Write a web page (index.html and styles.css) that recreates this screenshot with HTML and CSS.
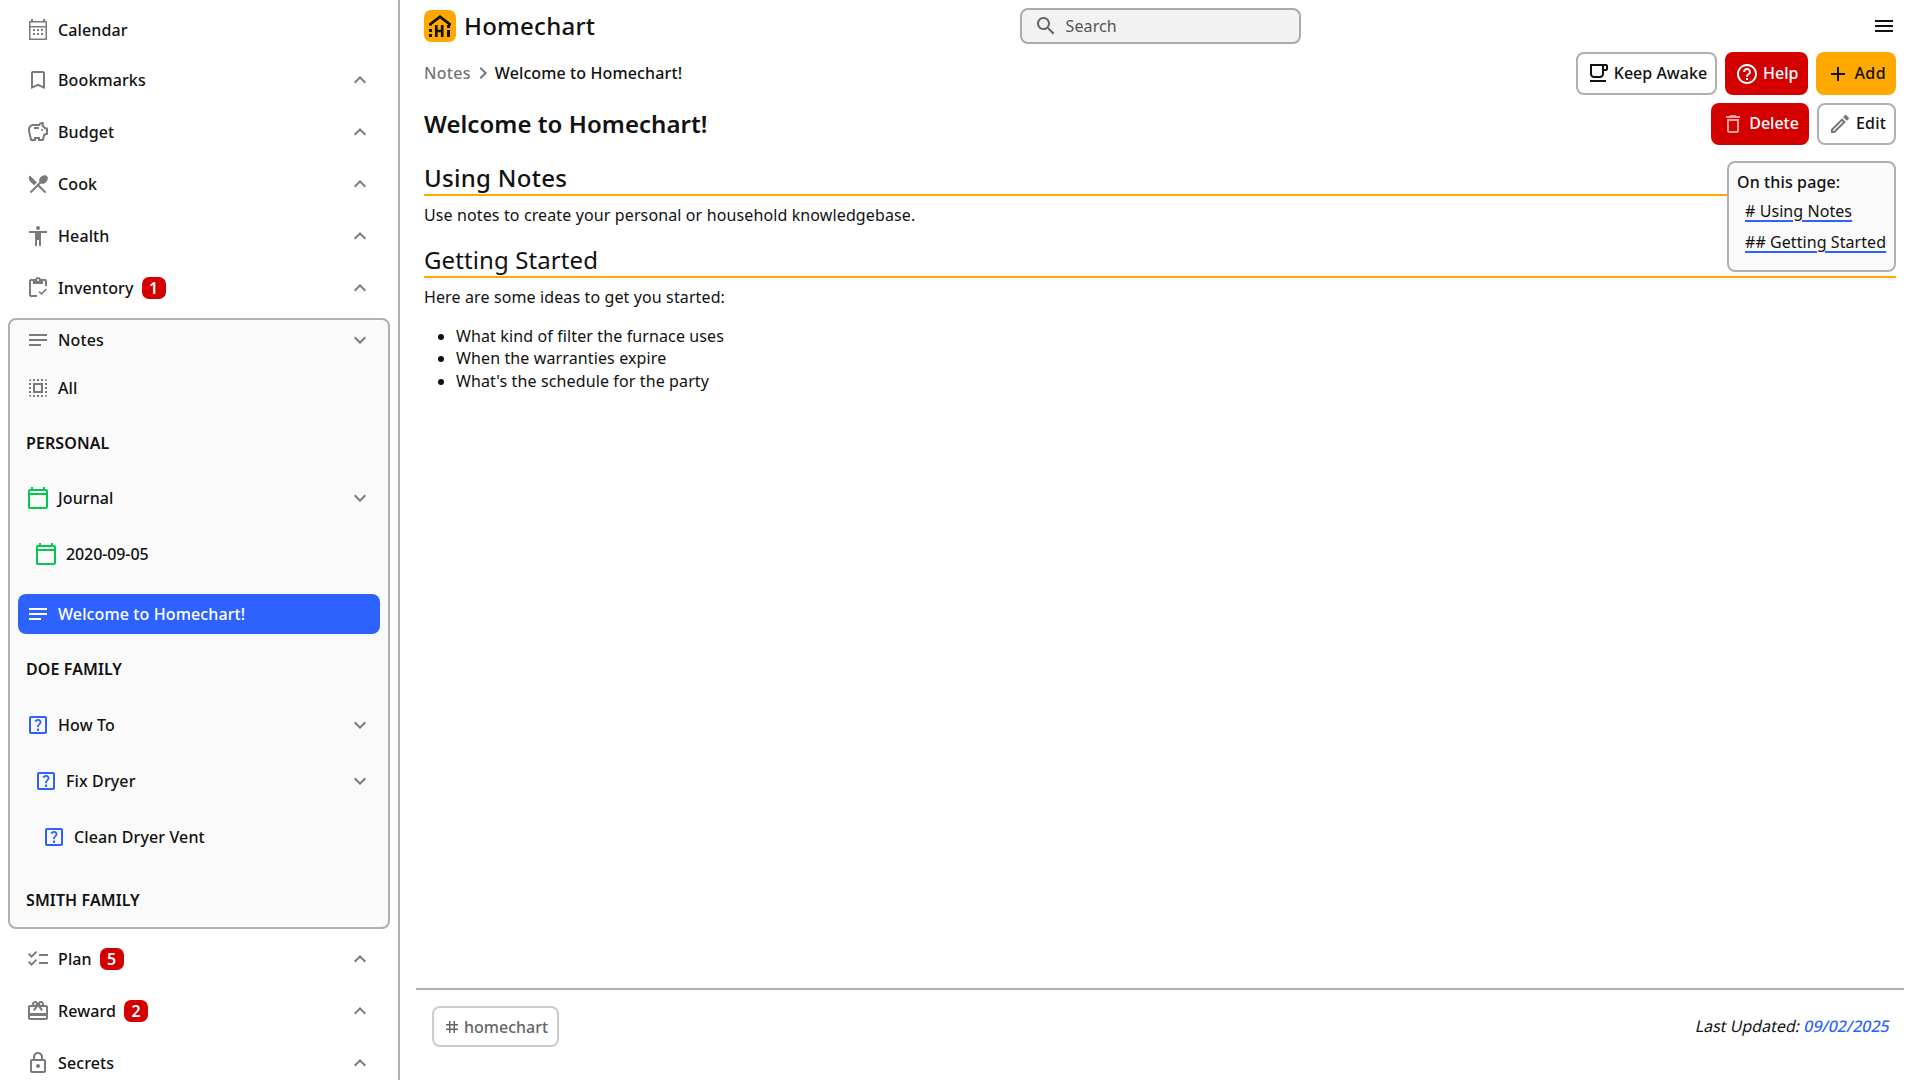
FILE: index.html
```html
<!DOCTYPE html>
<html lang="en">
  <head>
    <meta charset="UTF-8" />
    <meta name="viewport" content="width=device-width, initial-scale=1.0" />
    <title>Homechart</title>
    <link rel="stylesheet" href="styles.css">
  </head>
  <body>
    <svg class="defs" width="0" height="0">
      <symbol id="i-calendar" viewBox="0 0 24 24"><path d="M5 3V1h2v2h10V1h2v2h1c.6 0 1 .4 1 1v17c0 .6-.4 1-1 1H4c-.6 0-1-.4-1-1V4c0-.6.4-1 1-1zM4.500 4.500V8h15V4.500zm0 5v11h15v-11z"/><path d="M7 11h2v2H7zM11 11h2v2h-2zM15 11h2v2h-2zM7 15h2v2H7zM11 15h2v2h-2zM15 15h2v2h-2z"/></symbol>
      <symbol id="i-bookmark" viewBox="0 0 24 24"><path d="M17 3H7c-1.100 0-2 .9-2 2v16l7-3 7 3V5c0-1.100-.9-2-2-2zm0 15l-5-2.180L7 18V5h10v13z"/></symbol>
      <symbol id="i-budget" viewBox="0 0 24 24"><path d="M15 10c0-.55.45-1 1-1s1 .45 1 1-.45 1-1 1-1-.45-1-1zM8 9h5V7H8v2zm14-1.500v6.970l-2.820.94L17.500 21H12v-2h-2v2H4.500S2 12.540 2 9.500 4.460 4 7.500 4h5c.91-1.210 2.360-2 4-2 .83 0 1.500.67 1.500 1.500 0 .21-.04.4-.12.58-.14.32-.26.69-.32 1.090l2.270 2.330H22zm-2 2h-1l-3.500-3.500c0-.65.09-1.290.26-1.910-.97.25-1.760.97-2.090 1.910H7.500C5.570 6 4 7.570 4 9.500c0 1.880 1.220 6.650 2.010 9.500H8v-2h6v2h2l1.550-5.150 2.450-.82V9.500z"/></symbol>
      <symbol id="i-cook" viewBox="0 0 24 24"><path d="M8.100 13.340l2.830-2.830L3.910 3.500c-1.560 1.560-1.560 4.090 0 5.660l4.190 4.180zm6.780-1.810c1.530.71 3.680.21 5.270-1.380 1.910-1.910 2.280-4.650.81-6.120-1.460-1.460-4.200-1.100-6.120.81-1.590 1.590-2.090 3.740-1.380 5.270L3.700 19.870l1.410 1.410L12 14.410l6.880 6.880 1.410-1.410L13.410 13l1.470-1.470z"/></symbol>
      <symbol id="i-health" viewBox="0 0 24 24"><path d="M12 2c1.100 0 2 .9 2 2s-.9 2-2 2-2-.9-2-2 .9-2 2-2zm9 7h-6v13h-2v-6h-2v6H9V9H3V7h18v2z"/></symbol>
      <symbol id="i-inventory" viewBox="0 0 24 24"><path d="M5 5h2v3h10V5h2v5h2V5c0-1.100-.9-2-2-2h-4.180C14.400 1.840 13.300 1 12 1s-2.400.84-2.820 2H5c-1.100 0-2 .9-2 2v14c0 1.100.9 2 2 2h6v-2H5V5zm7-2c.55 0 1 .45 1 1s-.45 1-1 1-1-.45-1-1 .45-1 1-1z"/><path d="M21 13.500 15.500 19l-3-3 1.100-1.100 1.900 1.900 4.400-4.400z"/></symbol>
      <symbol id="i-notes" viewBox="0 0 24 24"><path d="M3 18h12v-2H3v2zM3 6v2h18V6H3zm0 7h18v-2H3v2z"/></symbol>
      <symbol id="i-all" viewBox="0 0 24 24"><path d="M3 5h2V3c-1.100 0-2 .9-2 2zm0 8h2v-2H3v2zm4 8h2v-2H7v2zM3 9h2V7H3v2zm10-6h-2v2h2V3zm6 0v2h2c0-1.100-.9-2-2-2zM5 21v-2H3c0 1.100.9 2 2 2zm-2-4h2v-2H3v2zM9 3H7v2h2V3zm2 18h2v-2h-2v2zm8-8h2v-2h-2v2zm0 8c1.100 0 2-.9 2-2h-2v2zm0-12h2V7h-2v2zm0 8h2v-2h-2v2zm-4 4h2v-2h-2v2zm0-16h2V3h-2v2zM7 17h10V7H7v10zm2-8h6v6H9V9z"/></symbol>
      <symbol id="i-journal" viewBox="0 0 24 24"><path d="M20 3h-1V1h-2v2H7V1H5v2H4c-1.100 0-2 .9-2 2v16c0 1.100.9 2 2 2h16c1.100 0 2-.9 2-2V5c0-1.100-.9-2-2-2zm0 18H4V9h16v12zm0-14H4V5h16v2z"/></symbol>
      <symbol id="i-howto" viewBox="0 0 24 24"><path d="M13.250 16.740c0 .69-.53 1.260-1.250 1.260-.7 0-1.260-.56-1.260-1.260 0-.71.56-1.250 1.260-1.250.71 0 1.250.55 1.250 1.250zM11.990 6c-1.770 0-2.980 1.150-3.430 2.490l1.640.69c.22-.67.74-1.480 1.800-1.480 1.620 0 1.940 1.520 1.370 2.330-.54.77-1.470 1.290-1.960 2.160-.39.69-.31 1.490-.31 1.980h1.820c0-.93.07-1.120.22-1.410.39-.72 1.110-1.060 1.870-2.170.68-1 .42-2.360-.02-3.080-.51-.84-1.530-1.510-3-1.510zM19 5H5v14h14V5m0-2c1.100 0 2 .9 2 2v14c0 1.100-.9 2-2 2H5c-1.100 0-2-.9-2-2V5c0-1.100.9-2 2-2h14z"/></symbol>
      <symbol id="i-plan" viewBox="0 0 24 24"><path d="M22 7h-9v2h9V7zm0 8h-9v2h9v-2zM5.540 11 2 7.460l1.410-1.410 2.120 2.120 4.240-4.240 1.410 1.410L5.540 11zm0 8L2 15.460l1.410-1.410 2.120 2.120 4.240-4.240 1.410 1.410L5.540 19z"/></symbol>
      <symbol id="i-reward" viewBox="0 0 24 24"><path d="M20 6h-2.180c.11-.31.18-.65.18-1 0-1.660-1.340-3-3-3-1.050 0-1.960.54-2.500 1.350l-.5.67-.5-.68C10.960 2.540 10.050 2 9 2 7.340 2 6 3.340 6 5c0 .35.07.69.18 1H4c-1.110 0-1.990.89-1.990 2L2 19c0 1.110.89 2 2 2h16c1.110 0 2-.89 2-2V8c0-1.110-.89-2-2-2zm-5-2c.55 0 1 .45 1 1s-.45 1-1 1-1-.45-1-1 .45-1 1-1zM9 4c.55 0 1 .45 1 1s-.45 1-1 1-1-.45-1-1 .45-1 1-1zm11 15H4v-2h16v2zm0-5H4V8h5.080L7 10.830 8.620 12 12 7.400l3.380 4.600L17 10.830 14.920 8H20v6z"/></symbol>
      <symbol id="i-lock" viewBox="0 0 24 24"><path d="M18 8h-1V6c0-2.760-2.240-5-5-5S7 3.240 7 6v2H6c-1.100 0-2 .9-2 2v10c0 1.100.9 2 2 2h12c1.100 0 2-.9 2-2V10c0-1.100-.9-2-2-2zM9 6c0-1.660 1.340-3 3-3s3 1.340 3 3v2H9V6zm9 14H6V10h12v10zm-6-3c1.100 0 2-.9 2-2s-.9-2-2-2-2 .9-2 2 .9 2 2 2z"/></symbol>
      <symbol id="i-up" viewBox="0 0 24 24"><path d="M12 8l-6 6 1.410 1.410L12 10.830l4.590 4.580L18 14z"/></symbol>
      <symbol id="i-down" viewBox="0 0 24 24"><path d="M16.590 8.590L12 13.170 7.410 8.590 6 10l6 6 6-6z"/></symbol>
      <symbol id="i-right" viewBox="0 0 24 24"><path d="M10 6 8.590 7.410 13.170 12l-4.580 4.590L10 18l6-6z"/></symbol>
      <symbol id="i-search" viewBox="0 0 24 24"><path d="M15.500 14h-.79l-.28-.27C15.410 12.590 16 11.110 16 9.500 16 5.910 13.090 3 9.500 3S3 5.910 3 9.500 5.910 16 9.500 16c1.610 0 3.090-.59 4.230-1.570l.27.28v.79l5 4.990L20.490 19l-4.990-5zm-6 0C7.010 14 5 11.990 5 9.500S7.010 5 9.500 5 14 7.010 14 9.500 11.990 14 9.500 14z"/></symbol>
      <symbol id="i-menu" viewBox="0 0 24 24"><path d="M3 18h18v-2H3v2zm0-5h18v-2H3v2zm0-7v2h18V6H3z"/></symbol>
      <symbol id="i-coffee" viewBox="0 0 24 24"><path d="M4 19h16v2H4zM20 3H4v10c0 2.210 1.790 4 4 4h6c2.210 0 4-1.790 4-4v-3h2c1.110 0 2-.89 2-2V5c0-1.110-.89-2-2-2zm-4 10c0 1.100-.9 2-2 2H8c-1.100 0-2-.9-2-2V5h10v8zm4-5h-2V5h2v3z"/></symbol>
      <symbol id="i-help" viewBox="0 0 24 24"><path d="M11 18h2v-2h-2v2zm1-16C6.480 2 2 6.480 2 12s4.480 10 10 10 10-4.480 10-10S17.520 2 12 2zm0 18c-4.410 0-8-3.590-8-8s3.590-8 8-8 8 3.590 8 8-3.590 8-8 8zm0-14c-2.210 0-4 1.790-4 4h2c0-1.100.9-2 2-2s2 .9 2 2c0 2-3 1.750-3 5h2c0-2.250 3-2.500 3-5 0-2.210-1.790-4-4-4z"/></symbol>
      <symbol id="i-add" viewBox="0 0 24 24"><path d="M19 13h-6v6h-2v-6H5v-2h6V5h2v6h6v2z"/></symbol>
      <symbol id="i-delete" viewBox="0 0 24 24"><path d="M6 19c0 1.100.9 2 2 2h8c1.100 0 2-.9 2-2V7H6v12zM8 9h8v10H8V9zm7.500-5l-1-1h-5l-1 1H5v2h14V4z"/></symbol>
      <symbol id="i-edit" viewBox="0 0 24 24"><path d="M3 17.250V21h3.750L17.810 9.940l-3.750-3.750L3 17.250zM5.920 19H5v-.92l9.060-9.060.92.92L5.920 19zM20.710 7.040c.39-.39.39-1.020 0-1.410l-2.340-2.340c-.2-.2-.45-.29-.71-.29s-.51.1-.7.29l-1.830 1.830 3.750 3.750 1.830-1.830z"/></symbol>
      <symbol id="i-tag" viewBox="0 0 24 24"><path d="M20 10V8h-4V4h-2v4h-4V4H8v4H4v2h4v4H4v2h4v4h2v-4h4v4h2v-4h4v-2h-4v-4h4zm-6 4h-4v-4h4v4z"/></symbol>
    </svg>

    <div class="app">
      <nav class="sidebar">
        <a class="nav-row nav-first"><svg class="icon"><use href="#i-calendar"/></svg><span>Calendar</span></a>
        <a class="nav-row"><svg class="icon"><use href="#i-bookmark"/></svg><span>Bookmarks</span><svg class="chevron"><use href="#i-up"/></svg></a>
        <a class="nav-row"><svg class="icon"><use href="#i-budget"/></svg><span>Budget</span><svg class="chevron"><use href="#i-up"/></svg></a>
        <a class="nav-row"><svg class="icon"><use href="#i-cook"/></svg><span>Cook</span><svg class="chevron"><use href="#i-up"/></svg></a>
        <a class="nav-row"><svg class="icon"><use href="#i-health"/></svg><span>Health</span><svg class="chevron"><use href="#i-up"/></svg></a>
        <a class="nav-row"><svg class="icon"><use href="#i-inventory"/></svg><span>Inventory</span><b class="badge">1</b><svg class="chevron"><use href="#i-up"/></svg></a>

        <div class="nav-open">
          <a class="tree-row tree-head"><svg class="icon"><use href="#i-notes"/></svg><span>Notes</span><svg class="chevron"><use href="#i-down"/></svg></a>
          <a class="tree-row tree-all"><svg class="icon"><use href="#i-all"/></svg><span>All</span></a>
          <div class="tree-row tree-label">PERSONAL</div>
          <a class="tree-row tree-journal"><svg class="icon icon-green"><use href="#i-journal"/></svg><span>Journal</span><svg class="chevron"><use href="#i-down"/></svg></a>
          <a class="tree-row level-1 tree-date"><svg class="icon icon-green"><use href="#i-journal"/></svg><span>2020-09-05</span></a>
          <a class="tree-row tree-selected"><svg class="icon"><use href="#i-notes"/></svg><span>Welcome to Homechart!</span></a>
          <div class="tree-row tree-label">DOE FAMILY</div>
          <a class="tree-row"><svg class="icon icon-blue"><use href="#i-howto"/></svg><span>How To</span><svg class="chevron"><use href="#i-down"/></svg></a>
          <a class="tree-row level-1"><svg class="icon icon-blue"><use href="#i-howto"/></svg><span>Fix Dryer</span><svg class="chevron"><use href="#i-down"/></svg></a>
          <a class="tree-row level-2"><svg class="icon icon-blue"><use href="#i-howto"/></svg><span>Clean Dryer Vent</span></a>
          <div class="tree-row tree-label tree-last">SMITH FAMILY</div>
        </div>

        <a class="nav-row nav-after"><svg class="icon"><use href="#i-plan"/></svg><span>Plan</span><b class="badge">5</b><svg class="chevron"><use href="#i-up"/></svg></a>
        <a class="nav-row"><svg class="icon"><use href="#i-reward"/></svg><span>Reward</span><b class="badge">2</b><svg class="chevron"><use href="#i-up"/></svg></a>
        <a class="nav-row"><svg class="icon"><use href="#i-lock"/></svg><span>Secrets</span><svg class="chevron"><use href="#i-up"/></svg></a>
      </nav>

      <main class="main">
        <header class="topbar">
          <a class="brand">
            <svg class="logo" viewBox="0 0 32 32">
              <rect width="32" height="32" rx="7" fill="#ffa800"/>
              <path d="M5 15.500v-2L16 5l11 8.500v2h-3v-1L16 8.500 8 14.500v1z" fill="#111"/>
              <path d="M5 19h3v3H5zM5 24h3v3H5zM11 15h2.600v4.700h3.300V15h2.600v12h-2.600v-4.800h-3.300V27H11zM23 15h3v3h-3zM23 20h3v7h-3z" fill="#111"/>
            </svg>
            <span class="brand-name">Homechart</span>
          </a>
          <div class="search">
            <svg class="search-icon"><use href="#i-search"/></svg>
            <span>Search</span>
          </div>
          <svg class="menu"><use href="#i-menu"/></svg>
        </header>

        <div class="content">
          <div class="crumbs-row">
            <div class="crumbs">
              <span class="crumb-parent">Notes</span>
              <svg class="crumb-sep"><use href="#i-right"/></svg>
              <span class="crumb-current">Welcome to Homechart!</span>
            </div>
            <div class="actions">
              <button class="btn btn-tall btn-plain"><svg><use href="#i-coffee"/></svg>Keep Awake</button>
              <button class="btn btn-tall btn-red"><svg><use href="#i-help"/></svg>Help</button>
              <button class="btn btn-tall btn-orange"><svg><use href="#i-add"/></svg>Add</button>
            </div>
          </div>

          <div class="title-row">
            <h1 class="title">Welcome to Homechart!</h1>
            <div class="actions">
              <button class="btn btn-short btn-red"><svg class="icon-faded"><use href="#i-delete"/></svg>Delete</button>
              <button class="btn btn-short btn-plain btn-edit"><svg class="icon-grey"><use href="#i-edit"/></svg>Edit</button>
            </div>
          </div>

          <article class="note">
            <aside class="toc">
              <div class="toc-title">On this page:</div>
              <a class="toc-link">#&nbsp;Using Notes</a>
              <a class="toc-link">##&nbsp;Getting Started</a>
            </aside>
            <h2 class="h-first">Using Notes</h2>
            <p>Use notes to create your personal or household knowledgebase.</p>
            <h2 class="h-second">Getting Started</h2>
            <p>Here are some ideas to get you started:</p>
            <ul>
              <li>What kind of filter the furnace uses</li>
              <li>When the warranties expire</li>
              <li>What's the schedule for the party</li>
            </ul>
          </article>
        </div>

        <footer class="footer">
          <a class="tag"><svg><use href="#i-tag"/></svg>homechart</a>
          <div class="updated">Last Updated: <span>09/02/2025</span></div>
        </footer>
      </main>
    </div>
  </body>
</html>
```

FILE: styles.css
```css
* {
  box-sizing: border-box;
}
body {
  margin: 0;
  height: 1080px;
  overflow: hidden;
  background-color: white;
  color: #111;
  font-family: "Noto Sans", Arial, sans-serif;
  font-size: 16px;
  letter-spacing: 0.12px;
}
.defs {
  display: block;
  height: 0;
}
.app {
  display: flex;
  height: 1080px;
}

/* sidebar */
.sidebar {
  width: 400px;
  height: 1080px;
  flex: none;
  overflow: hidden;
  padding: 6px 8px 0 8px;
  border-right: 2px solid #b0b0b0;
}
.nav-row,
.tree-row {
  display: flex;
  align-items: center;
  font-weight: 500;
}
.nav-row {
  height: 52px;
  padding: 0 18px 0 18px;
}
.nav-first {
  height: 48px;
}
.nav-after {
  margin-top: 4px;
}
.icon {
  width: 24px;
  height: 24px;
  flex: none;
  margin-right: 8px;
  fill: #7a7a7a;
}
.icon-green {
  fill: #00c853;
}
.icon-blue {
  fill: #2e62ff;
}
.chevron {
  width: 24px;
  height: 24px;
  flex: none;
  margin-left: auto;
  fill: #7a7a7a;
}
.badge {
  display: inline-flex;
  align-items: center;
  justify-content: center;
  width: 24px;
  height: 22px;
  margin-left: 8px;
  border-radius: 7px;
  background-color: #d40000;
  color: white;
  font-size: 16px;
  font-weight: 600;
}
.nav-open {
  height: 611px;
  margin-top: 4px;
  padding: 0 8px;
  border: 2px solid #b0b0b0;
  border-radius: 8px;
  background-color: #fafafa;
}
.tree-row {
  height: 40px;
  margin-top: 16px;
  padding: 0 8px 0 8px;
  border-radius: 8px;
}
.tree-head {
  margin-top: 0;
}
.tree-all {
  margin-top: 8px;
}
.tree-journal {
  margin-top: 15px;
}
.tree-date {
  letter-spacing: -0.1px;
}
.tree-label {
  margin-top: 15px;
  padding-left: 8px;
  font-weight: 600;
  letter-spacing: 0.1px;
}
.tree-last {
  margin-top: 23px;
}
.level-1 {
  padding-left: 16px;
}
.level-2 {
  padding-left: 24px;
}
.tree-selected {
  margin-top: 20px;
  background-color: #2e62ff;
  color: white;
}
.tree-selected .icon {
  fill: white;
}

/* main */
.main {
  flex: 1;
  min-width: 0;
  display: flex;
  flex-direction: column;
  padding: 0 16px 0 16px;
}
.topbar {
  display: grid;
  grid-template-columns: 1fr 281px 1fr;
  align-items: center;
  height: 52px;
  padding: 0 8px;
}
.brand {
  display: flex;
  align-items: center;
  gap: 8px;
  font-size: 24px;
  font-weight: 500;
  letter-spacing: 0.25px;
}
.brand-name {
  margin-bottom: 2px;
}
.logo {
  width: 32px;
  height: 32px;
}
.search {
  display: flex;
  align-items: center;
  gap: 8px;
  height: 36px;
  padding-left: 12px;
  border: 2px solid #aaa;
  border-radius: 8px;
  background-color: #f2f2f2;
  color: #555;
}
.search-icon {
  width: 24px;
  height: 24px;
  fill: #666;
}
.menu {
  width: 24px;
  height: 24px;
  justify-self: end;
  fill: #111;
}
.content {
  flex: 1;
  padding: 0 8px;
}
.crumbs-row,
.title-row {
  display: flex;
  align-items: center;
  justify-content: space-between;
}
.crumbs-row {
  height: 43px;
}
.title-row {
  height: 42px;
  margin-top: 8px;
}
.crumbs {
  display: flex;
  align-items: center;
  margin-top: -2px;
  font-weight: 500;
}
.crumb-parent {
  color: #757575;
  letter-spacing: 0.3px;
}
.crumb-sep {
  width: 24px;
  height: 24px;
  fill: #757575;
}
.actions {
  display: flex;
  gap: 8px;
}
.btn {
  display: flex;
  align-items: center;
  padding: 0 8px;
  border: 2px solid transparent;
  border-radius: 8px;
  color: #111;
  font-family: inherit;
  font-size: 16px;
  font-weight: 500;
  letter-spacing: 0;
}
.btn svg {
  width: 24px;
  height: 24px;
  margin-right: 4px;
  fill: currentColor;
}
.btn-tall {
  height: 43px;
  padding-bottom: 1px;
}
.btn-short {
  height: 42px;
  padding-bottom: 2px;
}
.btn-short svg,
.btn-red svg,
.btn-orange svg {
  margin-top: 2px;
}
.btn-plain {
  border-color: #b0b0b0;
  background-color: white;
}
.btn-red {
  background-color: #d40000;
  color: white;
}
.btn-orange {
  background-color: #ffa800;
  letter-spacing: 0.4px;
}
.btn-edit {
  padding-left: 9px;
  letter-spacing: 0.2px;
}
.btn svg.icon-faded {
  fill: #f0a0a0;
}
.btn svg.icon-grey {
  fill: #757575;
}
.title {
  margin: -2px 0 0 0;
  font-size: 24px;
  font-weight: 600;
  letter-spacing: 0.05px;
}

/* note body */
.note {
  position: relative;
  padding-top: 12px;
  line-height: 22.4px;
}
.note h2 {
  margin: 0;
  height: 39px;
  border-bottom: 2px solid #ffa800;
  font-size: 24px;
  line-height: 42px;
}
.h-first {
  font-weight: 500;
  letter-spacing: 0.3px;
}
.note .h-second {
  margin-top: 13px;
  font-weight: 400;
  letter-spacing: 0.1px;
}
.note p {
  margin: 8px 0 0 0;
}
.note ul {
  margin: 16px 0 0 0;
  padding-left: 32px;
}
.toc {
  position: absolute;
  top: 16px;
  right: 0;
  width: 169px;
  height: 111px;
  padding: 8px 8px 0 8px;
  border: 2px solid #b0b0b0;
  border-radius: 8px;
  background-color: #fafafa;
}
.toc-title {
  height: 26px;
  font-weight: 500;
}
.toc-link {
  display: block;
  height: 31px;
  padding: 3px 0 0 8px;
  letter-spacing: 0.07px;
  white-space: nowrap;
  text-decoration: underline #2e62ff 2px;
  text-underline-offset: 3px;
}

/* footer */
.footer {
  display: flex;
  align-items: flex-start;
  justify-content: space-between;
  height: 92px;
  padding: 16px 16px 0 16px;
  border-top: 2px solid #b0b0b0;
}
.tag {
  display: flex;
  align-items: center;
  gap: 3px;
  height: 41px;
  padding: 0 9px;
  border: 2px solid #ccc;
  border-radius: 8px;
  color: #666;
  font-weight: 500;
  letter-spacing: 0;
}
.tag svg {
  width: 18px;
  height: 18px;
  fill: #666;
}
.updated {
  display: inline-block;
  height: 41px;
  margin-right: -2px;
  line-height: 41px;
  transform: skewX(-12deg);
  transform-origin: right center;
  letter-spacing: 0;
}
.updated span {
  color: #2e62ff;
  font-weight: 500;
}
```
